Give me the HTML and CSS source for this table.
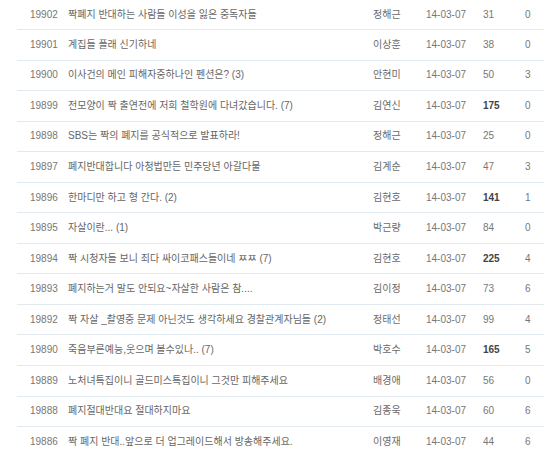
FILE: index.html
```html
<!DOCTYPE html>
<html lang="ko">
<head>
<meta charset="utf-8">
<title>게시판</title>
<link rel="stylesheet" href="styles.css">
</head>
<body>
<ul class="board">
  <li class="row"><span class="num">19902</span><span class="title">짝폐지 반대하는 사람들 이성을 잃은 중독자들</span><span class="name">정해근</span><span class="date">14-03-07</span><span class="hit">31</span><span class="cmt">0</span></li>
  <li class="row"><span class="num">19901</span><span class="title">계집들 플래 신기하네</span><span class="name">이상훈</span><span class="date">14-03-07</span><span class="hit">38</span><span class="cmt">0</span></li>
  <li class="row"><span class="num">19900</span><span class="title">이사건의 메인 피해자중하나인 펜션은? (3)</span><span class="name">안현미</span><span class="date">14-03-07</span><span class="hit">50</span><span class="cmt">3</span></li>
  <li class="row"><span class="num">19899</span><span class="title">전모양이 짝 출연전에 저희 철학원에 다녀갔습니다. (7)</span><span class="name">김연신</span><span class="date">14-03-07</span><span class="hit hot">175</span><span class="cmt">0</span></li>
  <li class="row"><span class="num">19898</span><span class="title">SBS는 짝의 폐지를 공식적으로 발표하라!</span><span class="name">정해근</span><span class="date">14-03-07</span><span class="hit">25</span><span class="cmt">0</span></li>
  <li class="row"><span class="num">19897</span><span class="title">폐지반대합니다 아청법만든 민주당년 아갈다물</span><span class="name">김계순</span><span class="date">14-03-07</span><span class="hit">47</span><span class="cmt">3</span></li>
  <li class="row"><span class="num">19896</span><span class="title">한마디만 하고 형 간다. (2)</span><span class="name">김현호</span><span class="date">14-03-07</span><span class="hit hot">141</span><span class="cmt">1</span></li>
  <li class="row"><span class="num">19895</span><span class="title">자살이란... (1)</span><span class="name">박근량</span><span class="date">14-03-07</span><span class="hit">84</span><span class="cmt">0</span></li>
  <li class="row"><span class="num">19894</span><span class="title">짝 시청자들 보니 죄다 싸이코패스들이네 ㅉㅉ (7)</span><span class="name">김현호</span><span class="date">14-03-07</span><span class="hit hot">225</span><span class="cmt">4</span></li>
  <li class="row"><span class="num">19893</span><span class="title">폐지하는거 말도 안되요~자살한 사람은 참....</span><span class="name">김이정</span><span class="date">14-03-07</span><span class="hit">73</span><span class="cmt">6</span></li>
  <li class="row"><span class="num">19892</span><span class="title">짝 자살 _촬영중 문제 아닌것도 생각하세요 경찰관계자님들 (2)</span><span class="name">정태선</span><span class="date">14-03-07</span><span class="hit">99</span><span class="cmt">4</span></li>
  <li class="row"><span class="num">19890</span><span class="title">죽음부른예능,웃으며 볼수있나.. (7)</span><span class="name">박호수</span><span class="date">14-03-07</span><span class="hit hot">165</span><span class="cmt">5</span></li>
  <li class="row"><span class="num">19889</span><span class="title">노처녀특집이니 골드미스특집이니 그것만 피해주세요</span><span class="name">배경애</span><span class="date">14-03-07</span><span class="hit">56</span><span class="cmt">0</span></li>
  <li class="row"><span class="num">19888</span><span class="title">폐지절대반대요 절대하지마요</span><span class="name">김종욱</span><span class="date">14-03-07</span><span class="hit">60</span><span class="cmt">6</span></li>
  <li class="row"><span class="num">19886</span><span class="title">짝 폐지 반대..앞으로 더 업그레이드해서 방송해주세요.</span><span class="name">이영재</span><span class="date">14-03-07</span><span class="hit">44</span><span class="cmt">6</span></li>
</ul>
</body>
</html>
```

FILE: styles.css
```css
html, body {
  margin: 0;
  padding: 0;
  background: #ffffff;
}

body {
  font-family: "Liberation Sans", "Noto Sans CJK KR", sans-serif;
  font-size: 10px;
  color: #666666;
}

.board {
  list-style: none;
  margin: 0 0 0 17px;
  padding: 0;
  width: 527px;
}

.row {
  display: grid;
  grid-template-columns: 51px 305px 53px 57px 42px 19px;
  align-items: center;
  box-sizing: border-box;
  height: 30.55px;
  border-bottom: 1px solid #e2eaf1;
  line-height: 12px;
  white-space: nowrap;
}

.row:first-child {
  height: 30px;
}

.num {
  padding-left: 13px;
  color: #777777;
}

.title {
  color: #666666;
  overflow: hidden;
}

.name {
  color: #6a6a6a;
}

.date,
.hit,
.cmt {
  color: #777777;
}

.hot {
  font-weight: bold;
  color: #444444;
}
```
